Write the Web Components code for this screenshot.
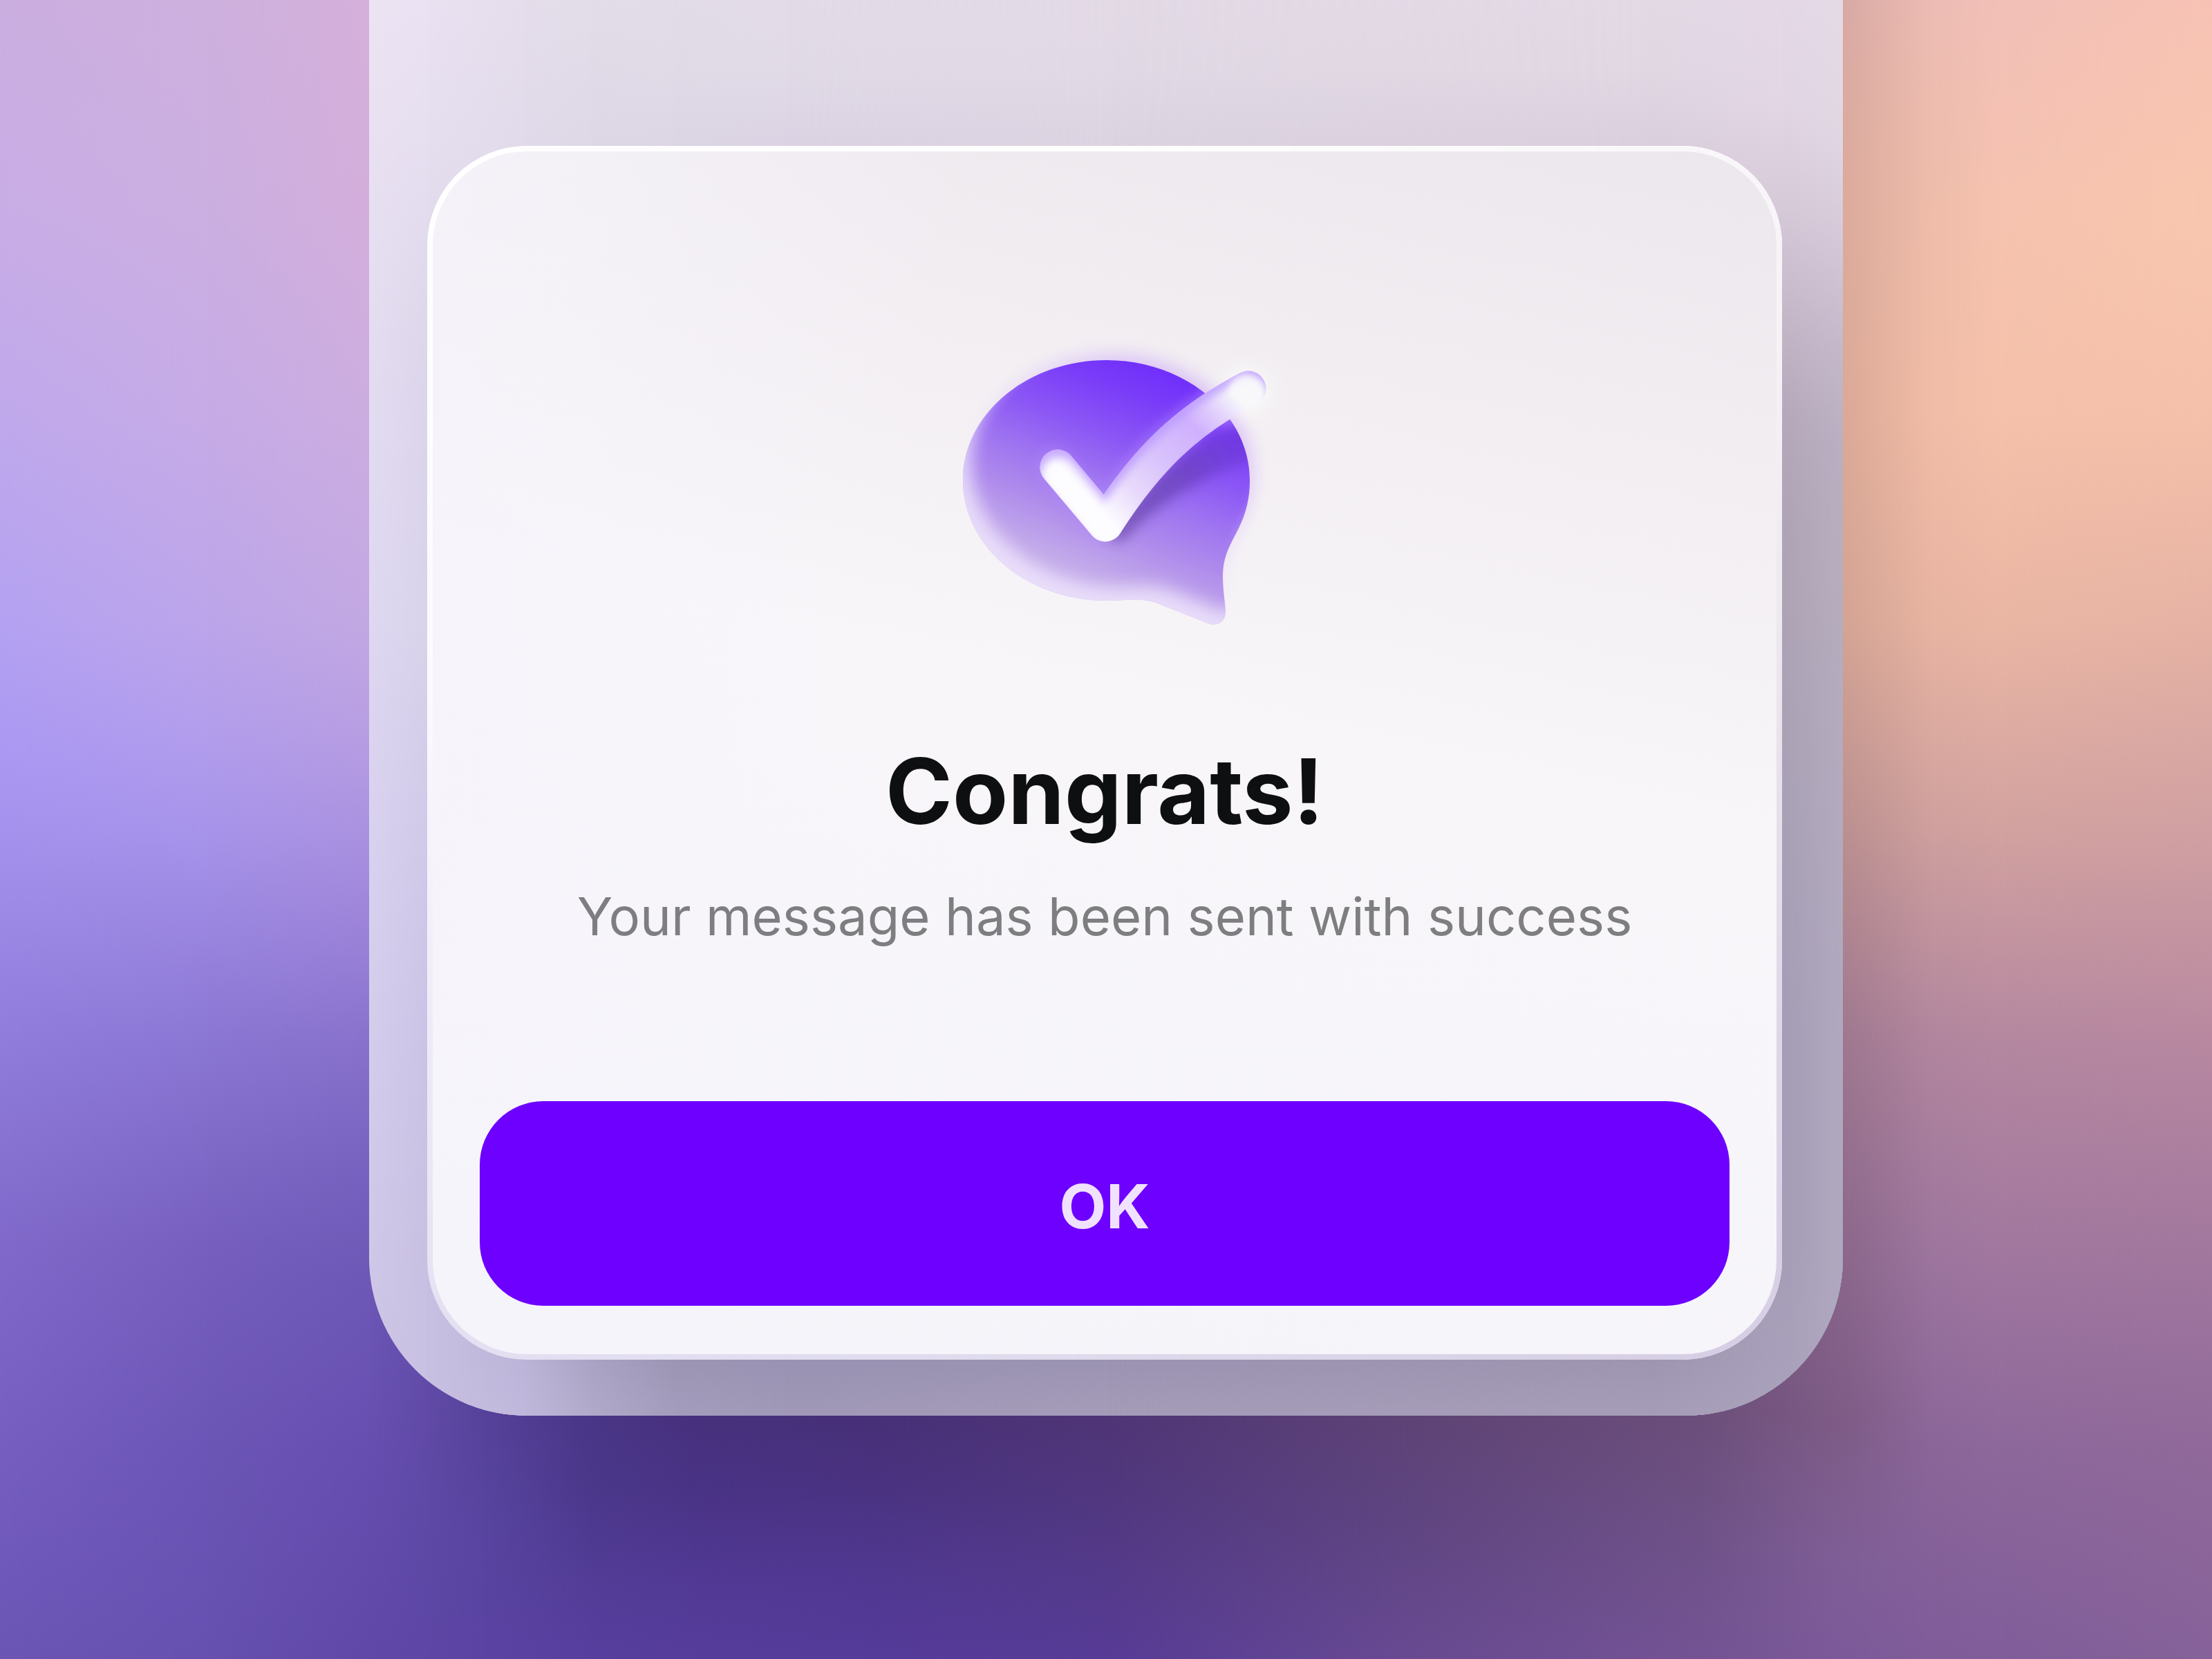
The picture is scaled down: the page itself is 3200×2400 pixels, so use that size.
<!DOCTYPE html>
<html lang="en">
<head>
<meta charset="utf-8">
<title>Message sent</title>
<style>
  html, body { margin: 0; min-height: 100%; }
  body { font-family: Inter, "Liberation Sans", sans-serif; }
</style>
</head>
<body>
<success-screen>
  <glass-dialog>
    <chat-check-icon slot="icon"></chat-check-icon>
    <span slot="title">Congrats!</span>
    <span slot="message">Your message has been sent with success</span>
    <primary-button slot="action">OK</primary-button>
  </glass-dialog>
</success-screen>

<script>
// Each mesh is a set of vertical gradients cross-faded from left to right.
// Column: [x, "y colour, y colour, ..."], in the units of `size`.
const MESHES = {
  page: {
    size: [3200, 2400],
    columns: [
      [0, "0 #cbaee0, 300 #c9ade6, 600 #c0a9ec, 900 #b4a2f2, 1100 #aa98f3, 1200 #a592ee, 1500 #907ddc, 1800 #8069ca, 2100 #755ec0, 2400 #6b55b5"],
      [300, "0 #ceb0de, 300 #cbafe1, 600 #c6abe6, 900 #bca5ea, 1050 #b39eec, 1200 #a794ea, 1500 #8b77d4, 1800 #765fbe, 2100 #6b55b5, 2400 #6650b0"],
      [534, "0 #d4b0da, 300 #d3aedb, 600 #ccade0, 900 #c2a8e2, 1050 #b89ee2, 1200 #ab92e0, 1350 #9b82d8, 1500 #8872cc, 1700 #7661bf, 1850 #6d58b6, 2100 #664eb0, 2400 #5f48a7"],
      [620, "1800 #664fae, 2050 #604aa6, 2200 #5e49a6, 2400 #5d46a5"],
      [700, "1800 #5a4499, 2050 #56429a, 2200 #5845a0, 2400 #5b43a3"],
      [850, "1800 #453184, 2050 #4a3687, 2150 #4b388b, 2300 #533d98, 2400 #573f9f"],
      [1000, "1800 #432d78, 2050 #47317d, 2150 #493385, 2300 #523a96, 2400 #563d9c"],
      [1250, "1800 #432c70, 2050 #473078, 2150 #4a3281, 2275 #503891, 2400 #553b9a"],
      [1600, "1800 #4c3272, 2050 #4f3576, 2150 #50377e, 2275 #543a8a, 2400 #573b96"],
      [2040, "1800 #5c4170, 2050 #5e4376, 2200 #5f4581, 2400 #684a92"],
      [2450, "1800 #694c76, 2050 #6b4e7a, 2200 #6e5186, 2400 #745394"],
      [2666, "0 #d8aaa4, 300 #dcab9c, 600 #dba996, 900 #d4a494, 1200 #bb9090, 1500 #9f7890, 1800 #8c688c, 2050 #7e5c86, 2250 #7f5e96, 2400 #7c5a9a"],
      [2800, "0 #edbcb4, 300 #efbdaa, 600 #f1bda8, 900 #e8b4a2, 1200 #cfa09e, 1500 #b2869e, 1800 #9e769e, 2100 #8a6699, 2400 #805c9a"],
      [2900, "0 #f2c0b8, 300 #f6c3b0, 600 #f5c1aa, 900 #eab6a4, 1200 #d2a2a0, 1500 #b588a0, 1800 #a2789f, 2100 #8d689b, 2400 #815d9a"],
      [3200, "0 #f7c2b4, 300 #f8c6ae, 600 #f5c0aa, 900 #e6b2a4, 1200 #d0a0a2, 1500 #b888a0, 1800 #a2789e, 2100 #90699a, 2400 #86629a"]
    ]
  },
  sheet: {
    size: [2132, 2048],
    columns: [
      [0, "0 #ece4f3, 300 #e8e0f2, 600 #e3dcf2, 900 #dfd8f2, 1200 #d9d2f0, 1500 #d4cdec, 1800 #d0c8e8, 2048 #ccc4e4"],
      [84, "0 #eae2f2, 200 #e6dff0, 450 #ded7ea, 600 #dbd4ea, 900 #d8d2ea, 1200 #d0c9e8, 1500 #cac3e6, 1800 #c8c0e2, 2048 #c8c0e2"],
      [226, "0 #e5ddeb, 211 #e1daea, 1967 #bcb4d8, 2048 #c0b8dc"],
      [320, "0 #e3dde9, 211 #ded7e6, 1967 #aba3c4, 2048 #b2aaca"],
      [440, "0 #e2dce8, 100 #e1dae7, 211 #dcd5e4, 1967 #9d95b4, 2048 #a59dbd"],
      [600, "0 #e3dbe8, 100 #e1dae7, 211 #dbd3e3, 1967 #9a92b2, 2048 #a199b8"],
      [1066, "0 #e3dae6, 100 #e1d9e5, 211 #dcd3e1, 1967 #9b93b2, 2048 #a59cb9"],
      [1850, "0 #e3d9e5, 100 #e1d7e3, 211 #dacfdd, 1967 #9e95b0, 2048 #a69db8"],
      [2046, "0 #e4d8e6, 150 #e2d6e4, 300 #d6c9d8, 450 #c5b8c9, 600 #b5a8ba, 750 #afa4b5, 900 #ada3b5, 1200 #a8a0b5, 1500 #a59db6, 1800 #a59db6, 2048 #aaa2bc"],
      [2132, "0 #e4dae6, 200 #e0d6e2, 350 #d4c8d8, 500 #c4b8ca, 650 #b9afc2, 900 #b6acbe, 1200 #b3aabf, 1500 #b0a8be, 2048 #b0a8c0"]
    ]
  },
  rim: {
    size: [100, 100],
    columns: [
      [0, "0 #ffffff, 45 #fbfafe, 75 #edeaf7, 100 #e4e0f2"],
      [50, "0 #ffffff, 100 #dedaeb"],
      [100, "0 #f9f6f9, 25 #f4eff3, 50 #e9e2ec, 75 #ddd6e6, 100 #d5cde3"]
    ]
  }
};

class GradientMesh extends HTMLElement {
  connectedCallback() {
    if (this.shadowRoot) return;
    const { size: [w, h], columns } = MESHES[this.getAttribute("name")];
    const root = this.attachShadow({ mode: "open" });
    root.innerHTML = `<style>
      :host { position: absolute; inset: 0; display: grid; overflow: hidden; border-radius: inherit; }
      div { grid-area: 1 / 1; }
    </style>`;
    columns.forEach(([x, stops], i) => {
      const band = document.createElement("div");
      const colours = stops.split(", ").map(s => {
        const [y, c] = s.split(" ");
        return `${c} ${y / h * 100}%`;
      }).join(", ");
      band.style.background = `linear-gradient(${colours})`;
      if (i > 0) {
        const from = columns[i - 1][0] / w * 100, to = x / w * 100;
        band.style.maskImage = `linear-gradient(90deg, transparent ${from}%, #000 ${to}%)`;
      }
      root.append(band);
    });
  }
}

class SuccessScreen extends HTMLElement {
  constructor() {
    super();
    this.attachShadow({ mode: "open" }).innerHTML = `<style>
      :host {
        position: relative; display: grid; grid-template-columns: 267fr 1066fr 267fr;
        align-items: start; min-height: 100vh; isolation: isolate;
      }
      gradient-mesh { z-index: -1; }
      main {
        position: relative; isolation: isolate; grid-column: 2;
        padding: 211px 88px 81px 84px; border-radius: 0 0 228px 228px;
      }
    </style>
    <gradient-mesh name="page"></gradient-mesh>
    <main><gradient-mesh name="sheet"></gradient-mesh><slot></slot></main>`;
  }
}

class GlassDialog extends HTMLElement {
  constructor() {
    super();
    this.attachShadow({ mode: "open" }).innerHTML = `<style>
      :host { position: relative; isolation: isolate; display: block; padding: 8px; border-radius: 144px; }
      gradient-mesh { z-index: -1; }
      section {
        display: flex; flex-direction: column; align-items: center;
        padding: 241px 68px 70px; border-radius: 136px; text-align: center;
        background:
          linear-gradient(100deg, #f6f4fcb0, #f6f4fc00 35%),
          linear-gradient(192deg, #ece7ec, #f3eff3 26%, #f8f6f9 46%, #f5f4fa);
      }
      h1 { margin: 125px 0 0; font-size: 131px; line-height: 160px; font-weight: 700; color: #0e0f11; }
      p { margin: 56px 0 224px; font-size: 76px; line-height: 88px; font-weight: 400; color: #7e7e80; }
      slot[name=action] { display: flex; align-self: stretch; }
    </style>
    <gradient-mesh name="rim"></gradient-mesh>
    <section role="dialog" aria-labelledby="title" aria-describedby="message">
      <slot name="icon"></slot>
      <h1 id="title"><slot name="title"></slot></h1>
      <p id="message"><slot name="message"></slot></p>
      <slot name="action"></slot>
    </section>`;
  }
}

class PrimaryButton extends HTMLElement {
  constructor() {
    super();
    this.attachShadow({ mode: "open" }).innerHTML = `<style>
      :host { display: flex; flex: 1; }
      button {
        flex: 1; padding: 100px 96px 92px; border: 0; border-radius: 92px; background: #6e00ff; color: #f0e2ff;
        font: inherit; font-size: 88px; line-height: 104px; font-weight: 700; cursor: pointer;
      }
    </style>
    <button type="button"><slot></slot></button>`;
  }
}

class ChatCheckIcon extends HTMLElement {
  constructor() {
    super();
    const bubble = "M260.5 61C375 61 468 139 468 235C468 262 462 285 450 308C439 330 429 345 429 374C429 392 432 408 433 424C434 439 421 447 408 442L340 415C327 409 312 407 298 407.5C285 408 275 409 260.5 409C146 409 53 331 53 235S146 61 260.5 61Z";
    const check = "M190 216L259 298C318 205 378 147 466 102";
    this.attachShadow({ mode: "open" }).innerHTML = `<style>
      :host { display: block; }
      svg { display: block; width: 516px; height: 480px; overflow: visible; }
      .tick { fill: none; stroke-width: 51; stroke-linecap: round; stroke-linejoin: round; }
    </style>
    <svg viewBox="0 0 516 480" aria-hidden="true">
      <defs>
        <linearGradient id="body" gradientUnits="userSpaceOnUse" x1="340" y1="70" x2="210" y2="390">
          <stop offset="0" stop-color="#702efb"/><stop offset=".15" stop-color="#7a3cf8"/>
          <stop offset=".35" stop-color="#8b56f5"/><stop offset=".55" stop-color="#a076f0"/>
          <stop offset=".7" stop-color="#ae8aec"/><stop offset=".9" stop-color="#c2a9ea"/>
          <stop offset="1" stop-color="#ccb6ec"/>
        </linearGradient>
        <linearGradient id="halo" gradientUnits="userSpaceOnUse" x1="380" y1="120" x2="240" y2="320">
          <stop offset="0" stop-color="#a560ff"/><stop offset="1" stop-color="#a560ff" stop-opacity="0"/>
        </linearGradient>
        <linearGradient id="cast" gradientUnits="userSpaceOnUse" x1="280" y1="310" x2="470" y2="180">
          <stop offset="0" stop-color="#5c3c9c"/><stop offset=".55" stop-color="#5c36a8" stop-opacity=".9"/>
          <stop offset="1" stop-color="#6030c8" stop-opacity=".55"/>
        </linearGradient>
        <linearGradient id="tick" gradientUnits="userSpaceOnUse" x1="262" y1="290" x2="462" y2="100">
          <stop offset="0" stop-color="#fdfcff"/><stop offset=".2" stop-color="#e8dafb"/>
          <stop offset=".42" stop-color="#d8c2fc"/><stop offset=".66" stop-color="#cfb0fe"/>
          <stop offset=".8" stop-color="#e2d2fc"/><stop offset=".93" stop-color="#f8f8fb"/>
        </linearGradient>
        <filter id="b4" x="-60%" y="-60%" width="220%" height="220%"><feGaussianBlur stdDeviation="4"/></filter>
        <filter id="b6" x="-30%" y="-30%" width="160%" height="160%"><feGaussianBlur stdDeviation="6"/></filter>
        <filter id="b9" x="-30%" y="-30%" width="160%" height="160%"><feGaussianBlur stdDeviation="9"/></filter>
        <filter id="b12" x="-60%" y="-60%" width="220%" height="220%"><feGaussianBlur stdDeviation="12"/></filter>
        <clipPath id="inside"><path d="${bubble}"/></clipPath>
        <mask id="rimLight" maskUnits="userSpaceOnUse" x="0" y="0" width="540" height="480">
          <rect width="540" height="480" fill="#fff"/>
          <path d="${bubble}" fill="#000" stroke="#000" stroke-width="12" transform="translate(18 -25)" filter="url(#b12)"/>
        </mask>
        <mask id="tickShape" maskUnits="userSpaceOnUse" x="0" y="0" width="540" height="480">
          <path class="tick" d="${check}" stroke="#fff"/>
        </mask>
        <mask id="tickShade" maskUnits="userSpaceOnUse" x="0" y="0" width="540" height="480">
          <rect width="540" height="480" fill="#fff"/>
          <path class="tick" d="${check}" stroke="#000" transform="translate(2 11)" filter="url(#b6)"/>
          <circle cx="462" cy="106" r="24" fill="#000" opacity=".85" filter="url(#b4)"/>
        </mask>
      </defs>
      <path d="${bubble}" fill="url(#halo)" opacity=".32" transform="translate(6 -8)" filter="url(#b12)"/>
      <circle cx="464" cy="106" r="38" fill="#fbfbf9" opacity=".7" filter="url(#b12)"/>
      <path d="${bubble}" fill="url(#body)"/>
      <g clip-path="url(#inside)">
        <rect width="540" height="480" fill="#eee4fc" mask="url(#rimLight)" opacity=".85"/>
        <path class="tick" d="${check}" stroke="#b48aff" opacity=".5" transform="translate(-4 -3)" filter="url(#b9)"/>
        <path d="M262 320C318 232 390 176 470 146L478 202C400 228 330 272 284 322Z" fill="url(#cast)" opacity=".62" filter="url(#b9)"/>
        <circle cx="438" cy="124" r="30" fill="#c8a0ff" opacity=".6" filter="url(#b12)"/>
      </g>
      <path class="tick" d="${check}" stroke="url(#tick)"/>
      <g mask="url(#tickShape)"><rect width="540" height="480" fill="#bc9aff" mask="url(#tickShade)" opacity=".8"/></g>
    </svg>`;
  }
}

customElements.define("gradient-mesh", GradientMesh);
customElements.define("chat-check-icon", ChatCheckIcon);
customElements.define("primary-button", PrimaryButton);
customElements.define("glass-dialog", GlassDialog);
customElements.define("success-screen", SuccessScreen);
</script>
</body>
</html>
